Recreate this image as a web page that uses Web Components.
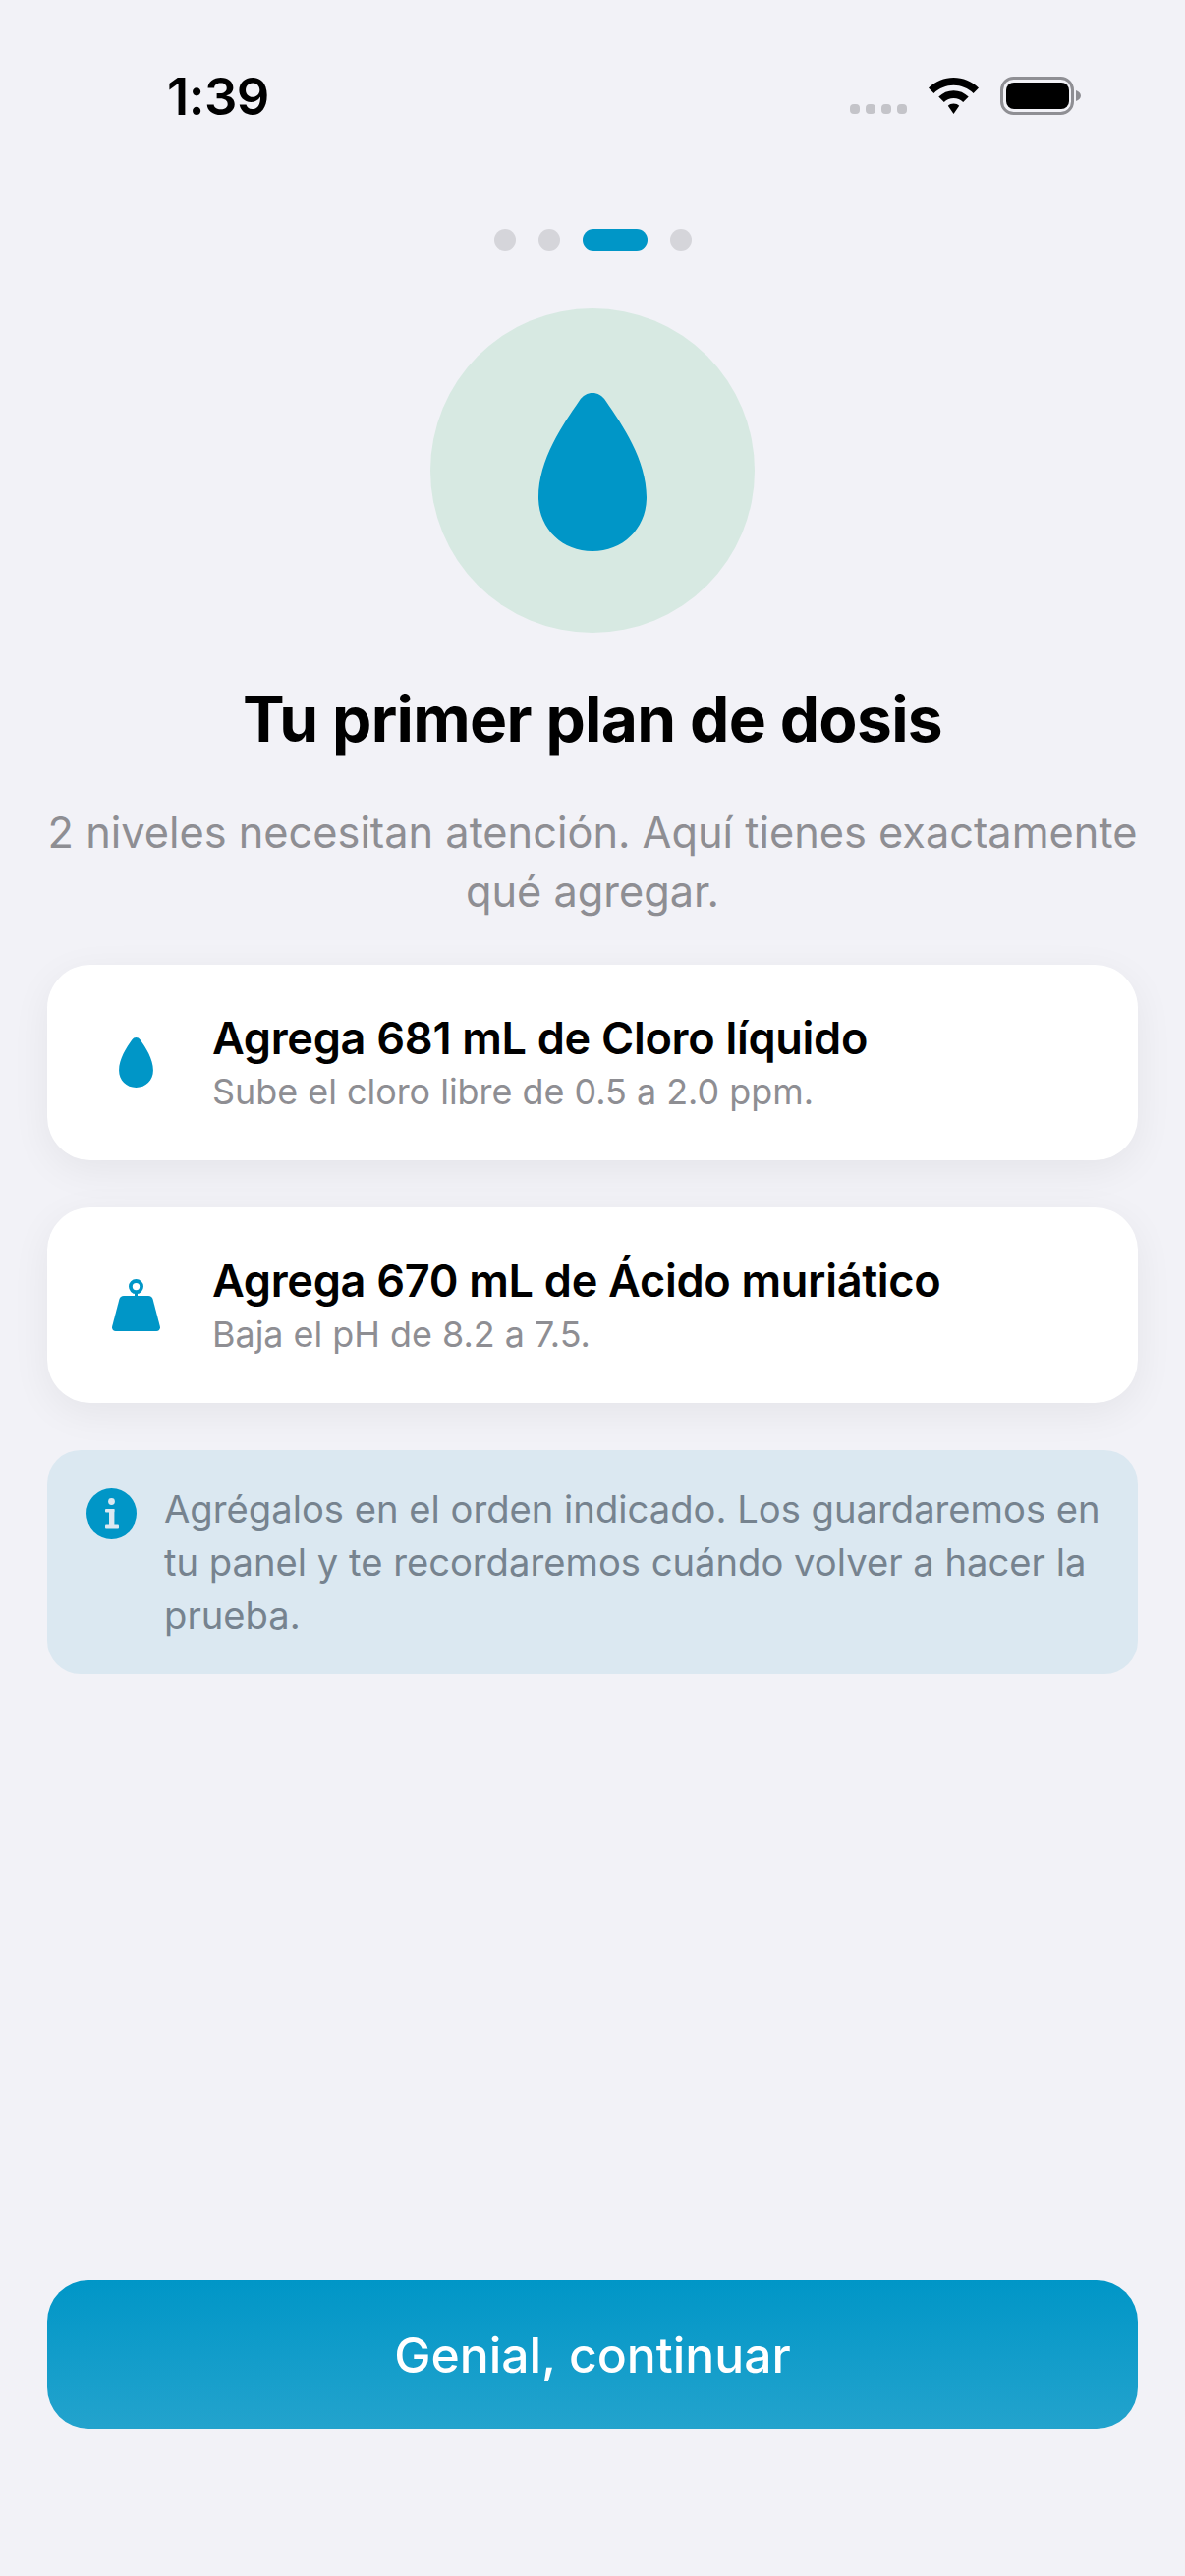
<!DOCTYPE html>
<html lang="es"><head><meta charset="utf-8"><title>Plan de dosis</title>
<style>
html,body{margin:0;padding:0;background:#f2f2f7}
body{font-family:Inter,"Noto Sans",sans-serif;-webkit-font-smoothing:antialiased}
</style></head><body>
<dose-screen>
  <status-bar slot="status" time="1:39"></status-bar>
  <page-dots slot="dots" count="4" active="2"></page-dots>
  <hero-drop slot="hero"></hero-drop>
  <span slot="title">Tu primer plan de dosis</span>
  <span slot="lead">2 niveles necesitan atención. Aquí tienes exactamente qué agregar.</span>
  <dose-card slot="cards" icon="drop" heading="Agrega 681 mL de Cloro líquido" detail="Sube el cloro libre de 0.5 a 2.0 ppm."></dose-card>
  <dose-card slot="cards" icon="weight" heading="Agrega 670 mL de Ácido muriático" detail="Baja el pH de 8.2 a 7.5."></dose-card>
  <info-note slot="note">Agrégalos en el orden indicado. Los guardaremos en tu panel y te recordaremos cuándo volver a hacer la prueba.</info-note>
  <primary-button slot="action">Genial, continuar</primary-button>
</dose-screen>
<script>
const DROP='M55 0C60 0 65 2.5 68.5 8C85 32 110 68 110 106C110 138 86 161 55 161C24 161 0 138 0 106C0 68 25 32 41.5 8C45 2.5 50 0 55 0Z';
function el(name,html){
  customElements.define(name,class extends HTMLElement{
    connectedCallback(){
      if(this.shadowRoot)return;
      const r=this.attachShadow({mode:'open'});
      r.innerHTML=typeof html==='function'?html(this):html;
    }
  });
}
el('dose-screen',`<style>
:host{display:flex;flex-direction:column;align-items:stretch;box-sizing:border-box;height:2622px;padding:0 48px 150px;background:#f2f2f7;color:#000}
.hero{display:flex;justify-content:center;margin-top:59px}
h1{margin:40px 0 0;font-size:64px;line-height:96px;font-weight:700;text-align:center;letter-spacing:-.65px;white-space:nowrap}
p{margin:37px 0 0;font-size:43.3px;line-height:60px;color:#8e8e93;text-align:center;font-weight:400}
.cards{display:flex;flex-direction:column;gap:48px;margin-top:45px}
.note{margin-top:48px}
.grow{flex:1}
</style>
<slot name="status"></slot><slot name="dots"></slot>
<div class="hero"><slot name="hero"></slot></div>
<h1><slot name="title"></slot></h1>
<p><slot name="lead"></slot></p>
<div class="cards"><slot name="cards"></slot></div>
<div class="note"><slot name="note"></slot></div>
<div class="grow"></div>
<slot name="action"></slot>`);
el('status-bar',h=>`<style>
:host{display:flex;align-items:flex-start;justify-content:space-between;height:233px;margin:0 -48px;padding:0 106px 0 170px;box-sizing:border-box}
.t{font-size:52.5px;font-weight:600;line-height:62px;margin-top:67px;letter-spacing:-.5px}
.i{display:flex;align-items:flex-start;margin-top:78px}
svg{display:block}
.cell{margin-top:28px;margin-right:22px}
.wifi{margin-top:1px;margin-right:22px}
</style>
<div class="t">${h.getAttribute('time')}</div>
<div class="i">
<svg class="cell" width="58" height="10" viewBox="0 0 58 10" fill="#c4c4c9"><rect width="10" height="10" rx="4"/><rect x="16" width="10" height="10" rx="4"/><rect x="32" width="10" height="10" rx="4"/><rect x="48" width="10" height="10" rx="4"/></svg>
<svg class="wifi" width="51" height="37" viewBox="0 0 51 37"><path d="M25.5 0C35 0 44 3.6 51 10.5L45.6 16C40.2 10.8 33 7.8 25.5 7.8S10.8 10.8 5.4 16L0 10.5C7 3.6 16 0 25.5 0Z"/><path d="M25.5 13.2C31.2 13.2 36.6 15.4 40.7 19.6L35.2 25C32.6 22.4 29.2 21 25.5 21S18.4 22.4 15.8 25L10.3 19.6C14.4 15.4 19.8 13.2 25.5 13.2Z"/><path d="M25.5 26.4C27.8 26.4 29.8 27.2 31.2 28.8L25.5 37L19.8 28.8C21.2 27.2 23.2 26.4 25.5 26.4Z" /></svg>
<svg width="82" height="39" viewBox="0 0 82 39"><rect x="1.5" y="1.5" width="72" height="36" rx="12" fill="none" stroke="#8f8f94" stroke-width="3"/><rect x="6" y="6" width="64" height="27" rx="8"/><path d="M77 14C80 15 82 17 82 19.5S80 24 77 25Z" fill="#8f8f94"/></svg>
</div>`);
el('page-dots',h=>{
  const n=+h.getAttribute('count'),a=+h.getAttribute('active');
  let s='';for(let i=0;i<n;i++)s+=`<i class="${i===a?'on':''}"></i>`;
  return `<style>:host{display:flex;justify-content:center;gap:23px}
  i{display:block;width:22px;height:22px;border-radius:11px;background:#d5d5da}
  i.on{width:66px;background:#0096c7}</style>${s}`;
});
el('hero-drop',`<style>:host{display:flex;align-items:center;justify-content:center;width:330px;height:330px;border-radius:50%;background:#d7e9e2}
svg{display:block;margin-top:2px}</style>
<svg width="110" height="161" viewBox="0 0 110 161"><path fill="#0096c7" d="${DROP}"/></svg>`);
el('dose-card',h=>{
  const ic=h.getAttribute('icon')==='drop'
   ?`<svg width="35" height="51" viewBox="0 0 110 161"><path fill="#0096c7" d="${DROP}"/></svg>`
   :`<svg width="49" height="53" viewBox="0 0 49 53"><circle cx="24.5" cy="7.6" r="5.6" fill="none" stroke="#0096c7" stroke-width="3.8"/><rect x="23" y="12" width="3" height="6" fill="#0096c7"/><path fill="#0096c7" d="M12 17H37C39.5 17 41 18.4 41.6 20.4L48.8 48C49.5 51 47.8 53 45.3 53H3.7C1.2 53 -.5 51 .2 48L7.4 20.4C8 18.4 9.5 17 12 17Z"/></svg>`;
  return `<style>:host{display:flex;align-items:center;height:199px;box-sizing:border-box;background:#fff;border-radius:44px;box-shadow:0 10px 40px rgba(0,0,0,.06)}
  .ic{flex:none;width:168px;display:flex;justify-content:center;box-sizing:border-box}
  .ic svg{display:block;transform:translateX(6px)}
  .tx{padding-top:2px}
  h2{margin:0;font-size:45.1px;line-height:56px;font-weight:600;letter-spacing:-.3px}
  div.d{font-size:35.9px;line-height:50px;color:#8e8e93;margin-top:1px}
  </style><div class="ic">${ic}</div><div class="tx"><h2>${h.getAttribute('heading')}</h2><div class="d">${h.getAttribute('detail')}</div></div>`;
});
el('info-note',`<style>:host{display:flex;align-items:flex-start;gap:28px;box-sizing:border-box;padding:33px 30px 33px 40px;background:#dbe8f1;border-radius:34px;color:#76838f;font-size:38.2px;line-height:54px}
svg{flex:none;display:block;margin-top:6px}</style>
<svg width="51" height="51" viewBox="0 0 51 51"><circle cx="25.5" cy="25.5" r="25.5" fill="#0096c7"/><g fill="#dbe8f1"><circle cx="25.5" cy="13.5" r="3.4"/><rect x="19" y="21" width="9.4" height="3.6" rx="1"/><rect x="23" y="21" width="5.4" height="18"/><rect x="19" y="36.5" width="14" height="4" rx="1"/></g></svg>
<div><slot></slot></div>`);
el('primary-button',`<style>:host{display:flex;align-items:center;justify-content:center;height:151px;border-radius:42px;background:linear-gradient(#0096c7,#23a3cd);color:#fff;font-size:49.8px;font-weight:500}</style><slot></slot>`);
</script>
</body></html>
